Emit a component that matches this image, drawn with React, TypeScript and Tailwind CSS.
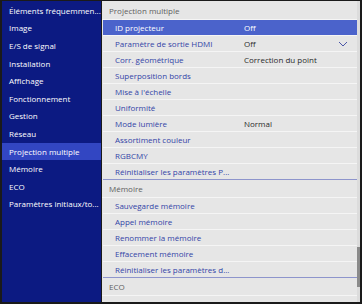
import React from 'react';

const leftItems = [
  'Éléments fréquemmen...',
  'Image',
  'E/S de signal',
  'Installation',
  'Affichage',
  'Fonctionnement',
  'Gestion',
  'Réseau',
  'Projection multiple',
  'Mémoire',
  'ECO',
  'Paramètres initiaux/to...',
];

type Row = { label: string; value?: string; chevron?: boolean; active?: boolean };

const sections: { title: string; rows: Row[] }[] = [
  {
    title: 'Projection multiple',
    rows: [
      { label: 'ID projecteur', value: 'Off', active: true },
      { label: 'Paramètre de sortie HDMI', value: 'Off', chevron: true },
      { label: 'Corr. géométrique', value: 'Correction du point' },
      { label: 'Superposition bords' },
      { label: 'Mise à l\'échelle' },
      { label: 'Uniformité' },
      { label: 'Mode lumière', value: 'Normal' },
      { label: 'Assortiment couleur' },
      { label: 'RGBCMY' },
      { label: 'Réinitialiser les paramètres P...' },
    ],
  },
  {
    title: 'Mémoire',
    rows: [
      { label: 'Sauvegarde mémoire' },
      { label: 'Appel mémoire' },
      { label: 'Renommer la mémoire' },
      { label: 'Effacement mémoire' },
      { label: 'Réinitialiser les paramètres d...' },
    ],
  },
  { title: 'ECO', rows: [] },
];

const App: React.FC = () => {
  return (
    <div
      className="w-[362px] h-[304px] bg-[#1a1a1a] pt-px pl-[2px] pr-[2px] pb-[2px] overflow-hidden"
      style={{ fontFamily: '"Open Sans", "Noto Sans", sans-serif' }}
    >
      <div className="flex h-full">
        {/* Left menu */}
        <div className="w-[99px] shrink-0 h-full bg-[#0c1a82] pt-px text-white text-[8px] overflow-hidden">
          {leftItems.map((item) => (
            <div
              key={item}
              className={`h-[17.6px] flex items-center pl-[7px] whitespace-nowrap ${
                item === 'Projection multiple' ? 'bg-[#3246c2]' : ''
              }`}
            >
              {item}
            </div>
          ))}
        </div>

        {/* Right panel */}
        <div className="flex-1 h-full bg-[#e6e6e6] flex ml-px">
          <div className="flex-1 pt-px">
            {sections.map((sec) => (
              <div key={sec.title}>
                <div className="h-[18px] flex items-center pl-[7px] text-[8px] text-[#5e5e5e] border-b border-[#f5f5f5]">
                  {sec.title}
                </div>
                {sec.rows.map((row, i) => (
                  <div
                    key={row.label}
                    className={`h-[16px] ml-px flex items-center text-[8px] ${
                      i === sec.rows.length - 1 ? 'border-b border-[#8e95cc]' : 'border-b border-[#f5f5f5]'
                    } ${row.active ? 'bg-[#4b63cb] text-white' : 'text-[#3344a6]'}`}
                  >
                    <div className="w-[141px] pl-[12px] whitespace-nowrap">{row.label}</div>
                    <div className={`flex-1 whitespace-nowrap ${row.active ? 'text-white' : 'text-[#2a2a2a]'}`}>
                      {row.value}
                    </div>
                    {row.chevron && (
                      <svg width="10" height="6" viewBox="0 0 10 6" className="mr-[9px]">
                        <path d="M1 1 L5 5 L9 1" fill="none" stroke="#4a56a8" strokeWidth="1" />
                      </svg>
                    )}
                  </div>
                ))}
              </div>
            ))}
          </div>
          {/* Scrollbar */}
          <div className="w-[3px] h-full bg-[#dcdcdc] pt-[246px]">
            <div className="h-[40px] bg-[#8a8a8a]" />
          </div>
        </div>
      </div>
    </div>
  );
};

export default App;
